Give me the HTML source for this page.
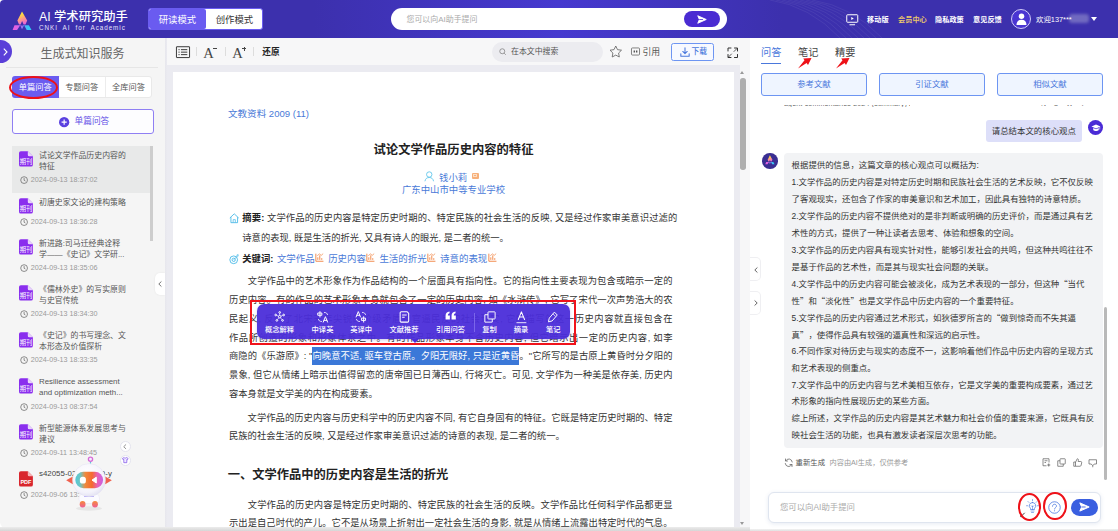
<!DOCTYPE html>
<html lang="zh-CN">
<head>
<meta charset="utf-8">
<title>AI 学术研究助手</title>
<style>
*{box-sizing:border-box;margin:0;padding:0}
html,body{width:1118px;height:531px;overflow:hidden;background:#fff}
body{font-family:"Liberation Sans","Noto Sans CJK SC",sans-serif;position:relative;color:#333;-webkit-font-smoothing:antialiased;text-spacing-trim:space-all}
.a{position:absolute}
svg{display:block;overflow:visible}
/* ---------- header ---------- */
#hd{left:0;top:0;width:1118px;height:38.400px;background:linear-gradient(90deg,#3c30ad 0,#3c30ad 28%,#4639cf 50%,#3c30ad 70%,#3c30ad 100%);border-top-left-radius:4px}
#hd .t1{left:39px;top:9.500px;font-size:12.3px;line-height:15px;color:#fff;white-space:nowrap;font-weight:500}
#hd .t2{left:39px;top:23.5px;font-size:6.3px;line-height:8px;color:#e4e1fa;white-space:nowrap;letter-spacing:.95px;word-spacing:2.4px}
#mode{left:148px;top:8px;width:115px;height:22px;background:#fff;border-radius:3px;border:1px solid #6a5cf0;overflow:hidden}
#mode .on{left:0;top:0;width:57px;height:20px;background:#6a5bf0;border-radius:2px;color:#fff;font-size:9.4px;line-height:21.400px;text-align:center}
#mode .off{left:57px;top:0;width:57px;height:20px;color:#333;font-size:9.4px;line-height:21.400px;text-align:center}
#hs{left:391px;top:8px;width:336px;height:22px;border-radius:11px;background:#fff}
#hs .ph{left:15.500px;top:1.200px;font-size:7.950px;line-height:22px;color:#aaa;white-space:nowrap}
#hs .go{left:293px;top:3px;width:36px;height:16px;border-radius:8px;background:#4a2bd2}
.nav{top:1px;height:38px;line-height:38px;font-size:7.2px;color:#fff;font-weight:700;white-space:nowrap}
/* ---------- sidebar ---------- */
#sb{left:0;top:38px;width:165px;height:489.500px;background:#f5f5f5;border-bottom-left-radius:6px}
#gap1{left:165px;top:38px;width:7.500px;height:490px;background:linear-gradient(90deg,#e6e6ec 0,#ebebf1 2px,#ebebf1 100%)}
.it{left:12px;width:138px}
.it .ttl{left:27px;font-size:7.9px;line-height:10.800px;color:#555;white-space:nowrap}
.it .dt{left:18.800px;font-size:7.200px;line-height:9px;color:#999;white-space:nowrap}
.tab{top:38px;height:22px;line-height:23.400px;font-size:8.2px;text-align:center;color:#555;white-space:nowrap}
/* ---------- doc ---------- */
#tb{left:166.500px;top:38px;width:583.500px;height:27px;background:#f7f7f8}
#doc{left:172.500px;top:72px;width:561.700px;height:456px;background:#fff;overflow:hidden}
.ln{position:absolute;left:56.500px;width:443.500px;font-size:9.3px;line-height:18.7px;height:18.7px;color:#333;white-space:nowrap}
.j{text-align:justify;text-align-last:justify}
.blue{color:#4a7ad8}
.kw{font-size:9.450px}
.q{font-family:"Noto Sans CJK SC",sans-serif}
/* ---------- right ---------- */
#rp{left:750px;top:38px;width:368px;height:490px;background:#fff}
.rb{top:35px;width:106px;height:22.500px;border:1px solid #6d95f2;border-radius:3px;background:#eff5ff;color:#4a78dc;font-size:8.4px;line-height:20px;text-align:center}
.al{position:absolute;left:42px;width:301.5px;font-size:8.420px;line-height:16.85px;height:16.85px;color:#333;white-space:nowrap}
</style>
</head>
<body>
<!-- HEADER -->
<div id="hd" class="a">
  <div class="a t1">AI 学术研究助手</div>
  <div class="a t2">CNKI AI for Academic</div>
  <div id="mode" class="a"><div class="a on">研读模式</div><div class="a off">创作模式</div></div>
  <div id="hs" class="a"><div class="a ph">您可以向AI助手提问</div><div class="a go"><svg class="a" style="left:12.500px;top:3.500px" width="10" height="9" viewBox="0 0 20 18"><path d="M1.500 1.500l17 7.500-17 7.500 3.300-7.500z" fill="#fff" stroke="#fff" stroke-width="1.800" stroke-linejoin="round"/><path d="M4.500 9H12" stroke="#4a2bd2" stroke-width="1.600"/></svg></div></div>

  <!-- decorative lines -->
  <svg class="a" style="left:770px;top:0" width="120" height="38" viewBox="0 0 120 38" fill="none" stroke="#fff" stroke-width=".5" opacity=".13"><path d="M0 0Q40 6 70 38M6 0Q46 6 76 38M12 0Q52 6 82 38M18 0Q58 6 88 38M24 0Q64 6 94 38M30 0Q70 6 100 38M36 0Q76 6 106 38M42 0Q82 6 112 38"/></svg>
  <!-- logo -->
  <svg class="a" style="left:11.500px;top:10.500px" width="20" height="20" viewBox="0 0 200 200">
    <defs>
      <linearGradient id="lg1" x1=".35" y1="0" x2=".65" y2="1"><stop offset="0" stop-color="#f4f236"/><stop offset=".3" stop-color="#fbd04a"/><stop offset=".55" stop-color="#ff9c86"/><stop offset="1" stop-color="#e462dc"/></linearGradient>
      <linearGradient id="lg2" x1="0" y1="0" x2="1" y2="0"><stop offset="0" stop-color="#ee5edc"/><stop offset=".35" stop-color="#d466ea"/><stop offset=".5" stop-color="#9a7af8"/><stop offset=".68" stop-color="#4cb6f4"/><stop offset="1" stop-color="#22d4f6"/></linearGradient>
    </defs>
    <path d="M100 4L152 95 135 134H116L101 100 86 134H70L54 95z" fill="url(#lg1)"/>
    <path d="M25 143H82L51 191H6zM121 143H169L195 191H147zM82 143H95L100 158 106 143H121L100 182z" fill="url(#lg2)"/>
  </svg>
  <!-- monitor icon -->
  <svg class="a" style="left:846px;top:13.500px" width="12.500" height="11.500" viewBox="0 0 25 23" fill="none" stroke="#fff" stroke-width="2"><rect x="1.500" y="1.500" width="22" height="15" rx="1.500"/><path d="M7 21.500h11" /><path d="M10.500 6v6l5-3z" fill="#fff" stroke="none"/></svg>
  <!-- avatar -->
  <div class="a" style="left:1011px;top:9px;width:20px;height:20px;border-radius:50%;background:#4a35d2;border:1.200px solid #cfc9f7"></div>
  <svg class="a" style="left:1015.500px;top:12.500px" width="11" height="12.500" viewBox="0 0 22 25" fill="#fff"><circle cx="11" cy="6.500" r="5.500"/><path d="M1 24c0-7 4-10.500 10-10.500S21 17 21 24z"/></svg>
  <div class="a" style="left:1069px;top:14px;width:20px;height:9px;background:#7a74c4;border-radius:3px;filter:blur(1.600px);opacity:.85"></div>
  <div class="a" style="left:1091px;top:17px;width:0;height:0;border-left:3.200px solid transparent;border-right:3.200px solid transparent;border-top:4px solid #fff"></div>
  <div class="a nav" style="left:867px">移动版</div>
  <div class="a nav" style="left:898px;color:#e9c56c">会员中心</div>
  <div class="a nav" style="left:935px">隐私政策</div>
  <div class="a nav" style="left:973px">意见反馈</div>
  <div class="a nav" style="left:1036px;font-weight:400;font-size:7.4px">欢迎137***</div>
</div>
<!-- SIDEBAR -->
<div id="sb" class="a">
  <div class="a" style="left:0;top:2px;width:12px;height:23px;background:#5a3fd8;border-radius:0 12px 12px 0"></div>
  <svg class="a" style="left:3px;top:9.5px" width="5" height="8" viewBox="0 0 5 8" fill="none" stroke="#fff" stroke-width="1.1"><path d="M.8.7L4 4 .8 7.3"/></svg>
  <div class="a" style="left:0;top:8.900px;width:165px;text-align:center;font-size:12px;line-height:14px;color:#666">生成式知识服务</div>
  <div class="a" style="left:6px;top:29px;width:152px;height:1px;background:#e6e6e6"></div>
  <div class="a" style="left:12px;top:38px;width:140px;height:21.800px;background:#fff;border:1px solid #e9e9e9;border-radius:3px"></div>
  <div class="a" style="left:12px;top:38px;width:46.5px;height:21.800px;background:#6b5cf0;border-radius:3px 0 0 3px"></div>
  <div class="a" style="left:105px;top:39px;width:1px;height:20px;background:#ececec"></div>
  <div class="a tab" style="left:12px;width:46.5px;color:#fff">单篇问答</div>
  <div class="a tab" style="left:58.5px;width:46.5px">专题问答</div>
  <div class="a tab" style="left:105px;width:47px">全库问答</div>
  <div class="a" style="left:9.300px;top:38.400px;width:49.200px;height:23px;border:2.400px solid #ee1118;border-radius:50%"></div>
  <div class="a" style="left:12px;top:71px;width:142px;height:25px;border:1px solid #8f7ff3;border-radius:3px;background:#fdfdff"></div>
  <svg class="a" style="left:59px;top:79px" width="10.300" height="10.300" viewBox="0 0 18 18"><circle cx="9" cy="9" r="9" fill="#5a41e0"/><path d="M9 4.5v9M4.5 9h9" stroke="#fff" stroke-width="2" fill="none"/></svg>
  <div class="a" style="left:74.5px;top:76px;font-size:8.7px;line-height:15px;color:#6450e6;white-space:nowrap">单篇问答</div>
<div class="a it" style="top:108px;height:46.600px;background:#e8e9e9;"><svg class="a" style="left:6.800px;top:5.300px" width="13.900" height="15.800" viewBox="0 0 30 33"><path d="M4 0h15l11 11v18a4 4 0 0 1-4 4H4a4 4 0 0 1-4-4V4a4 4 0 0 1 4-4z" fill="#8a2eee"/><path d="M19 0l11 11h-8a3 3 0 0 1-3-3z" fill="#e9d6fb"/><text x="15" y="27.5" text-anchor="middle" font-size="13.600" fill="#fff" font-family="Liberation Sans,Noto Sans CJK SC,sans-serif">期刊</text></svg><div class="a ttl" style="top:4.900px">试论文学作品历史内容的<br>特征</div><svg class="a" style="left:7.600px;top:29.9px" width="8.200" height="8.200" viewBox="0 0 16 16" fill="none" stroke="#6a6a6a" stroke-width="1.500"><circle cx="8" cy="8" r="6.6"/><path d="M8 4v4.3l2.6 1.5"/></svg><div class="a dt" style="top:28.9px">2024-09-13 18:37:02</div></div>
<div class="a it" style="top:155px;height:42px;"><svg class="a" style="left:6.800px;top:5.300px" width="13.900" height="15.800" viewBox="0 0 30 33"><path d="M4 0h15l11 11v18a4 4 0 0 1-4 4H4a4 4 0 0 1-4-4V4a4 4 0 0 1 4-4z" fill="#8a2eee"/><path d="M19 0l11 11h-8a3 3 0 0 1-3-3z" fill="#e9d6fb"/><text x="15" y="27.5" text-anchor="middle" font-size="13.600" fill="#fff" font-family="Liberation Sans,Noto Sans CJK SC,sans-serif">期刊</text></svg><div class="a ttl" style="top:4.900px">初唐史家文论的建构策略</div><svg class="a" style="left:7.600px;top:25.4px" width="8.200" height="8.200" viewBox="0 0 16 16" fill="none" stroke="#6a6a6a" stroke-width="1.500"><circle cx="8" cy="8" r="6.6"/><path d="M8 4v4.3l2.6 1.5"/></svg><div class="a dt" style="top:24.4px">2024-09-13 18:36:28</div></div>
<div class="a it" style="top:196px;height:46px;"><svg class="a" style="left:6.800px;top:5.300px" width="13.900" height="15.800" viewBox="0 0 30 33"><path d="M4 0h15l11 11v18a4 4 0 0 1-4 4H4a4 4 0 0 1-4-4V4a4 4 0 0 1 4-4z" fill="#8a2eee"/><path d="M19 0l11 11h-8a3 3 0 0 1-3-3z" fill="#e9d6fb"/><text x="15" y="27.5" text-anchor="middle" font-size="13.600" fill="#fff" font-family="Liberation Sans,Noto Sans CJK SC,sans-serif">期刊</text></svg><div class="a ttl" style="top:4.900px">新进路:司马迁经典诠释<br>学——《史记》文学研...</div><svg class="a" style="left:7.600px;top:29.9px" width="8.200" height="8.200" viewBox="0 0 16 16" fill="none" stroke="#6a6a6a" stroke-width="1.500"><circle cx="8" cy="8" r="6.6"/><path d="M8 4v4.3l2.6 1.5"/></svg><div class="a dt" style="top:28.9px">2024-09-13 18:35:06</div></div>
<div class="a it" style="top:242px;height:46px;"><svg class="a" style="left:6.800px;top:5.300px" width="13.900" height="15.800" viewBox="0 0 30 33"><path d="M4 0h15l11 11v18a4 4 0 0 1-4 4H4a4 4 0 0 1-4-4V4a4 4 0 0 1 4-4z" fill="#8a2eee"/><path d="M19 0l11 11h-8a3 3 0 0 1-3-3z" fill="#e9d6fb"/><text x="15" y="27.5" text-anchor="middle" font-size="13.600" fill="#fff" font-family="Liberation Sans,Noto Sans CJK SC,sans-serif">期刊</text></svg><div class="a ttl" style="top:4.900px">《儒林外史》的写实原则<br>与史官传统</div><svg class="a" style="left:7.600px;top:29.9px" width="8.200" height="8.200" viewBox="0 0 16 16" fill="none" stroke="#6a6a6a" stroke-width="1.500"><circle cx="8" cy="8" r="6.6"/><path d="M8 4v4.3l2.6 1.5"/></svg><div class="a dt" style="top:28.9px">2024-09-13 18:34:30</div></div>
<div class="a it" style="top:288.500px;height:47px;"><svg class="a" style="left:6.800px;top:5.300px" width="13.900" height="15.800" viewBox="0 0 30 33"><path d="M4 0h15l11 11v18a4 4 0 0 1-4 4H4a4 4 0 0 1-4-4V4a4 4 0 0 1 4-4z" fill="#8a2eee"/><path d="M19 0l11 11h-8a3 3 0 0 1-3-3z" fill="#e9d6fb"/><text x="15" y="27.5" text-anchor="middle" font-size="13.600" fill="#fff" font-family="Liberation Sans,Noto Sans CJK SC,sans-serif">期刊</text></svg><div class="a ttl" style="top:4.900px">《史记》的书写理念、文<br>本形态及价值探析</div><svg class="a" style="left:7.600px;top:29.9px" width="8.200" height="8.200" viewBox="0 0 16 16" fill="none" stroke="#6a6a6a" stroke-width="1.500"><circle cx="8" cy="8" r="6.6"/><path d="M8 4v4.3l2.6 1.5"/></svg><div class="a dt" style="top:28.9px">2024-09-13 18:33:35</div></div>
<div class="a it" style="top:335px;height:46px;"><svg class="a" style="left:6.800px;top:5.300px" width="13.900" height="15.800" viewBox="0 0 30 33"><path d="M4 0h15l11 11v18a4 4 0 0 1-4 4H4a4 4 0 0 1-4-4V4a4 4 0 0 1 4-4z" fill="#8a2eee"/><path d="M19 0l11 11h-8a3 3 0 0 1-3-3z" fill="#e9d6fb"/><text x="15" y="27.5" text-anchor="middle" font-size="13.600" fill="#fff" font-family="Liberation Sans,Noto Sans CJK SC,sans-serif">期刊</text></svg><div class="a ttl" style="top:4.300px">Resilience assessment<br>and optimization meth...</div><svg class="a" style="left:7.600px;top:29.9px" width="8.200" height="8.200" viewBox="0 0 16 16" fill="none" stroke="#6a6a6a" stroke-width="1.500"><circle cx="8" cy="8" r="6.6"/><path d="M8 4v4.3l2.6 1.5"/></svg><div class="a dt" style="top:28.9px">2024-09-13 08:37:54</div></div>
<div class="a it" style="top:381px;height:47px;"><svg class="a" style="left:6.800px;top:5.300px" width="13.900" height="15.800" viewBox="0 0 30 33"><path d="M4 0h15l11 11v18a4 4 0 0 1-4 4H4a4 4 0 0 1-4-4V4a4 4 0 0 1 4-4z" fill="#8a2eee"/><path d="M19 0l11 11h-8a3 3 0 0 1-3-3z" fill="#e9d6fb"/><text x="15" y="27.5" text-anchor="middle" font-size="13.600" fill="#fff" font-family="Liberation Sans,Noto Sans CJK SC,sans-serif">期刊</text></svg><div class="a ttl" style="top:4.900px">新型能源体系发展思考与<br>建议</div><svg class="a" style="left:7.600px;top:29.9px" width="8.200" height="8.200" viewBox="0 0 16 16" fill="none" stroke="#6a6a6a" stroke-width="1.500"><circle cx="8" cy="8" r="6.6"/><path d="M8 4v4.3l2.6 1.5"/></svg><div class="a dt" style="top:28.9px">2024-09-11 13:48:45</div></div>
<div class="a it" style="top:428px;height:46px;"><svg class="a" style="left:6.800px;top:5.300px" width="13.900" height="15.800" viewBox="0 0 30 33"><path d="M4 0h15l11 11v18a4 4 0 0 1-4 4H4a4 4 0 0 1-4-4V4a4 4 0 0 1 4-4z" fill="#d9262d"/><path d="M19 0l11 11h-8a3 3 0 0 1-3-3z" fill="#f6b5b8"/><text x="15" y="27" text-anchor="middle" font-size="12" font-weight="700" fill="#fff" font-family="Liberation Sans,sans-serif">PDF</text></svg><div class="a ttl" style="top:3.300px;color:#444">s42055-023-00199-y</div><svg class="a" style="left:7.600px;top:25.4px" width="8.200" height="8.200" viewBox="0 0 16 16" fill="none" stroke="#6a6a6a" stroke-width="1.500"><circle cx="8" cy="8" r="6.6"/><path d="M8 4v4.3l2.6 1.5"/></svg><div class="a dt" style="top:24.4px">2024-09-06 13:26:41</div></div>
  <div class="a" style="left:150px;top:108px;width:3px;height:95px;background:#cdcdcd"></div>
  <!-- collapse tab -->
  <div class="a" style="left:154.5px;top:235px;width:10.5px;height:21.5px;background:#fff;border-radius:5px 0 0 5px;box-shadow:0 0 2px rgba(0,0,0,.08)"></div>
  <svg class="a" style="left:158px;top:243px" width="4" height="6" viewBox="0 0 4 6" fill="none" stroke="#777" stroke-width="1"><path d="M3.4.5L.8 3l2.6 2.5"/></svg>
  <!-- small round buttons -->
  <div class="a" style="left:119.5px;top:402.5px;width:11.5px;height:11.5px;border-radius:50%;background:#fff;border:.6px solid #e4e4ee"></div>
  <svg class="a" style="left:123.3px;top:405.6px" width="3.6" height="5.4" viewBox="0 0 4 6" fill="none" stroke="#888" stroke-width="1"><path d="M3.4.5L.8 3l2.6 2.5"/></svg>
  <div class="a" style="left:119.5px;top:416.5px;width:11.5px;height:11.5px;border-radius:50%;background:#fff;border:.6px solid #e4e4ee"></div>
  <svg class="a" style="left:122px;top:419.2px" width="6.6" height="6.2" viewBox="0 0 14 13" fill="#efeaff" stroke="#7a4ee8" stroke-width="1.5" stroke-linejoin="round"><path d="M4.4 1L1 3l1.4 2.8 1.4-.6V12h6.4V5.2l1.4.6L13 3 9.600 1C9.200 2.600 4.800 2.600 4.400 1z"/></svg>
  <!-- robot -->
  <svg class="a" style="left:60px;top:414px" width="60" height="62" viewBox="0 0 60 62">
    <defs>
      <linearGradient id="vz" x1="0" y1="0" x2="1" y2="0"><stop offset="0" stop-color="#52c9d6"/><stop offset=".18" stop-color="#6fc4c4"/><stop offset=".36" stop-color="#f08a3c"/><stop offset=".6" stop-color="#f5692f"/><stop offset=".8" stop-color="#e860b8"/><stop offset="1" stop-color="#c861e2"/></linearGradient>
      <radialGradient id="hdg" cx=".42" cy=".35" r=".75"><stop offset="0" stop-color="#ffffff"/><stop offset=".7" stop-color="#f4f3fb"/><stop offset="1" stop-color="#d9d8ee"/></radialGradient>
      <linearGradient id="ft" x1="0" y1="0" x2="0" y2="1"><stop offset="0" stop-color="#f58a3a"/><stop offset="1" stop-color="#ee5c98"/></linearGradient>
    </defs>
    <ellipse cx="29" cy="56.500" rx="13" ry="2.200" fill="#000" opacity=".06"/>
    <path d="M30.500 12.500v-3" stroke="#5fc6dc" stroke-width="1.200"/>
    <circle cx="30.500" cy="7.300" r="2.100" fill="#f4ecff" stroke="#d66ad6" stroke-width="1.300"/>
    <path d="M12.800 24.500L6.200 28.300l6.600 4z" fill="#f0604e"/>
    <path d="M45.200 24.500l6.600 3.800-6.600 4z" fill="#f0604e"/>
    <rect x="19" y="42" width="20.500" height="9.500" rx="4" fill="#fbfbff" stroke="#e4e3f2" stroke-width=".5"/>
    <path d="M24 44.500h10" stroke="#9a8cf0" stroke-width=".9" opacity=".7"/>
    <ellipse cx="22.600" cy="52.300" rx="2.900" ry="3.300" fill="url(#ft)"/>
    <ellipse cx="35" cy="52.300" rx="2.900" ry="3.300" fill="url(#ft)"/>
    <circle cx="29" cy="28" r="16.400" fill="url(#hdg)" stroke="#e2e1f1" stroke-width=".5"/>
    <rect x="15.300" y="19.800" width="27.800" height="16.400" rx="8.200" fill="url(#vz)"/>
    <rect x="19.900" y="24.800" width="6" height="6.800" rx="2.600" fill="#fff"/>
    <path d="M36.300 25.200l-4.300 2.900 4.300 2.900z" fill="#fff" stroke="#fff" stroke-width="1" stroke-linejoin="round"/>
  </svg>

</div>
<div id="gap1" class="a"></div>
<!-- DOC -->
<div id="tb" class="a"><div class="a" style="left:5.500px;top:0;width:578px;height:27px">
  <svg class="a" style="left:3.600px;top:8.400px" width="14" height="12.300" viewBox="0 0 31 26" fill="none" stroke="#3a3a3a" stroke-width="2.200"><rect x="1" y="1" width="29" height="24" rx=".5"/><path d="M11 7.500h14M11 13h14M11 18.500h14M5.500 7.500h2.500M5.500 13h2.500M5.500 18.500h2.500"/></svg>
  <div class="a" style="left:24px;top:9px;width:1px;height:9px;background:#ddd"></div>
  <div class="a" style="left:31.300px;top:7px;font-family:'Liberation Serif',serif;font-size:14.600px;line-height:16px;color:#444">A</div>
  <div class="a" style="left:41px;top:10.300px;width:3.800px;height:1px;background:#444"></div>
  <div class="a" style="left:52.500px;top:9px;width:1px;height:9px;background:#ddd"></div>
  <div class="a" style="left:60.300px;top:7px;font-family:'Liberation Serif',serif;font-size:14.600px;line-height:16px;color:#444">A</div>
  <div class="a" style="left:70px;top:10.300px;width:4.200px;height:1px;background:#444"></div>
  <div class="a" style="left:71.600px;top:8.700px;width:1px;height:4.200px;background:#444"></div>
  <div class="a" style="left:81px;top:9px;width:1px;height:9px;background:#ddd"></div>
  <div class="a" style="left:90.300px;top:7.400px;font-size:8.600px;line-height:14px;color:#222;font-weight:700;white-space:nowrap">还原</div>
  <!-- search in doc -->
  <div class="a" style="left:320px;top:4px;width:111px;height:19.500px;border-radius:10px;background:#ececf0"></div>
  <svg class="a" style="left:327px;top:10px" width="7.500" height="7.500" viewBox="0 0 15 15" fill="none" stroke="#777" stroke-width="1.400"><circle cx="6.500" cy="6.500" r="5"/><path d="M10.300 10.300L13.500 13.500"/></svg>
  <div class="a" style="left:339px;top:4px;font-size:7.900px;line-height:19.500px;color:#555;white-space:nowrap">在本文中搜索</div>
  <svg class="a" style="left:436.500px;top:7px" width="13.500" height="13" viewBox="0 0 27 26" fill="none" stroke="#666" stroke-width="1.700" stroke-linejoin="round"><path d="M13.500 2l3.500 7.300 8 1.100-5.800 5.600 1.400 8L13.500 20.200 6.400 24l1.400-8L2 10.400l8-1.100z"/></svg>
  <svg class="a" style="left:458.800px;top:9.200px" width="9" height="9" viewBox="0 0 19 17" fill="none" stroke="#666" stroke-width="1.700"><rect x="1" y="1" width="17" height="15" rx="2"/><path d="M5.500 6.500h3v4h-3zM10.500 6.500h3v4h-3z" fill="#555" stroke="none"/></svg>
  <div class="a" style="left:470.500px;top:7px;font-size:8.800px;line-height:15px;color:#555;white-space:nowrap">引用</div>
  <div class="a" style="left:499.300px;top:4.600px;width:42.600px;height:18px;border:1px solid #6d95f2;border-radius:2.500px;background:#f7f9ff"></div>
  <svg class="a" style="left:507.800px;top:8.500px" width="10" height="10" viewBox="0 0 18 18" fill="none" stroke="#4a78dc" stroke-width="1.900" stroke-linecap="round" stroke-linejoin="round"><path d="M9 1.500v10M5 8l4 4 4-4M1.500 12v4.500h15V12"/></svg>
  <div class="a" style="left:519.500px;top:7px;font-size:7.800px;line-height:14px;color:#4a78dc;font-weight:500;white-space:nowrap">下载</div>
  <svg class="a" style="left:554.500px;top:8.500px" width="11.500" height="11.500" viewBox="0 0 23 23" fill="none" stroke="#333" stroke-width="2" stroke-linecap="round" stroke-linejoin="round"><path d="M2 8V2h6M15 2h6v6M21 15v6h-6M8 21H2v-6"/><path d="M14 9l6-6M9 14l-6 6" stroke-width="1.600"/></svg>
</div></div>
<div class="a" style="left:172px;top:65px;width:578px;height:7px;background:#ebebf1"></div>
<div id="doc" class="a">
<div class="a blue" style="left:55.500px;top:35.400px;font-size:9.550px;line-height:14px;white-space:nowrap">文教资料 2009 (11)</div>
<div class="a" style="left:0;top:68.5px;width:562px;text-align:center;font-size:12.300px;line-height:18px;font-weight:700;color:#222;white-space:nowrap">试论文学作品历史内容的特征</div>
<svg class="a" style="left:251px;top:98.800px" width="10.500" height="10.800" viewBox="0 0 19 20" fill="none" stroke="#5cc4ea" stroke-width="1.600"><circle cx="9.500" cy="6.500" r="5"/><path d="M1.500 19c.8-4.500 3.500-7 8-7s7.200 2.500 8 7"/></svg>
<div class="a blue" style="left:266.600px;top:99px;font-size:9.400px;line-height:13px;white-space:nowrap">钱小莉</div>
<div class="a" style="left:299.200px;top:100.700px;width:7px;height:6.800px;background:#f7b07a;border-radius:1px"></div>
<div class="a" style="left:300.500px;top:102.300px;width:4.400px;height:3.200px;border:.8px solid #fde3cc;opacity:.9"></div>
<div class="a blue" style="left:0;top:111px;width:562px;text-align:center;font-size:9.400px;line-height:13px;white-space:nowrap">广东中山市中等专业学校</div>
<svg class="a" style="left:56.300px;top:140.500px" width="10.500" height="10.500" viewBox="0 0 19 19" fill="none" stroke="#3db4e6" stroke-width="1.500" stroke-linejoin="round"><path d="M1.500 9L9.500 1.500l8 7.500M3.500 7.500V17.500h12V7.500"/><path d="M7.500 17v-5h4v5" stroke-width="1.200"/></svg>
<div class="ln j" style="top:136.65px;left:69.800px;width:435px;"><b style="color:#222">摘要:</b> 文学作品的历史内容是特定历史时期的、特定民族的社会生活的反映, 又是经过作家审美意识过滤的</div>
<div class="ln" style="top:156.65px;left:69.800px;">诗意的表现, 既是生活的折光, 又具有诗人的眼光, 是二者的统一。</div>
<svg class="a" style="left:56.300px;top:181.500px" width="10.500" height="10.500" viewBox="0 0 19 19" fill="none" stroke="#3db4e6" stroke-width="1.500"><circle cx="8.500" cy="10.500" r="7"/><circle cx="8.500" cy="10.500" r="3"/><path d="M8.500 10.500L16 3M13.500 2.500l3-1.500-.500 3.500" stroke-width="1.300"/></svg>
<div class="ln" style="top:177.65px;left:69.800px;"><b style="color:#222">关键词:</b> <span class="blue kw" style="margin-left:1px">文学作品</span><svg style="display:inline-block;vertical-align:-0.8px;margin:0 1.600px 0 .3px" width="9" height="9.200" viewBox="0 0 16 16" fill="none" stroke="#f0803c" stroke-width="1.600"><path d="M1.500 1v13.500H15"/><path d="M5 12V7.500M8.500 12V4M12 12V9" /><path d="M4 4.500L8 1.500l3 2.500 3.500-3" stroke-width="1.200"/></svg> <span class="blue kw">历史内容</span><svg style="display:inline-block;vertical-align:-0.8px;margin:0 1.600px 0 .3px" width="9" height="9.200" viewBox="0 0 16 16" fill="none" stroke="#f0803c" stroke-width="1.600"><path d="M1.500 1v13.500H15"/><path d="M5 12V7.500M8.500 12V4M12 12V9" /><path d="M4 4.500L8 1.500l3 2.500 3.500-3" stroke-width="1.200"/></svg> <span class="blue kw">生活的折光</span><svg style="display:inline-block;vertical-align:-0.8px;margin:0 1.600px 0 .3px" width="9" height="9.200" viewBox="0 0 16 16" fill="none" stroke="#f0803c" stroke-width="1.600"><path d="M1.500 1v13.500H15"/><path d="M5 12V7.500M8.500 12V4M12 12V9" /><path d="M4 4.500L8 1.500l3 2.500 3.500-3" stroke-width="1.200"/></svg> <span class="blue kw">诗意的表现</span><svg style="display:inline-block;vertical-align:-0.8px;margin:0 1.600px 0 .3px" width="9" height="9.200" viewBox="0 0 16 16" fill="none" stroke="#f0803c" stroke-width="1.600"><path d="M1.500 1v13.500H15"/><path d="M5 12V7.500M8.500 12V4M12 12V9" /><path d="M4 4.500L8 1.500l3 2.500 3.500-3" stroke-width="1.200"/></svg></div>
<div class="ln j" style="top:200.20px;"><span style="display:inline-block;width:18.600px"></span>文学作品中的艺术形象作为作品结构的一个层面具有指向性。它的指向性主要表现为包含或暗示一定的</div>
<div class="ln j" style="top:219.20px;">历史内容。有的作品的艺术形象本身就包含了一定的历史内容, 如《水浒传》, 它写了宋代一次声势浩大的农</div>
<div class="ln j" style="top:237.90px;">民起义, 反映了北宋末年尖锐的阶级矛盾和官逼民反的社会现实, 它所描写的这一历史内容就直接包含在</div>
<div class="ln j" style="top:256.60px;">作品所创造的形象和形象体系之中。有的作品形象本身不含历史内容, 但它暗示出一定的历史内容, 如李</div>
<div class="ln j" style="top:275.30px;">商隐的《乐游原》: "<span style="background:#3b78d8;color:#fff;padding:4.200px 0 4.200px 0">向晚意不适, 驱车登古原。夕阳无限好, 只是近黄昏</span>。"它所写的是古原上黄昏时分夕阳的</div>
<div class="ln j" style="top:294.00px;">景象, 但它从情绪上暗示出值得留恋的唐帝国已日薄西山, 行将灭亡。可见, 文学作为一种美是依存美, 历史内</div>
<div class="ln" style="top:312.70px;">容本身就是文学美的内在构成要素。</div>
<div class="ln j" style="top:336.70px;"><span style="display:inline-block;width:18.600px"></span>文学作品的历史内容与历史科学中的历史内容不同, 有它自身固有的特征。它既是特定历史时期的、特定</div>
<div class="ln" style="top:355.40px;">民族的社会生活的反映, 又是经过作家审美意识过滤的诗意的表现, 是二者的统一。</div>
<div class="a" style="left:55.300px;top:393.700px;font-size:12.250px;line-height:18px;font-weight:700;color:#222;white-space:nowrap">一、文学作品中的历史内容是生活的折光</div>
<div class="ln j" style="top:423.70px;"><span style="display:inline-block;width:18.600px"></span>文学作品的历史内容是特定历史时期的、特定民族的社会生活的反映。文学作品比任何科学作品都更显</div>
<div class="ln j" style="top:442.40px;">示出是自己时代的产儿。它不是从场景上折射出一定社会生活的身影, 就是从情绪上流露出特定时代的气息。</div>
</div>
<!-- doc scrollbar -->
<div class="a" style="left:734px;top:72px;width:6px;height:456px;background:#ebebf1"></div>
<div class="a" style="left:740px;top:65px;width:10px;height:463px;background:#f7f7f8"></div>
<div class="a" style="left:740px;top:78px;width:5.500px;height:92px;background:#aeaeae;border-radius:2.700px"></div>
<div class="a" style="left:740.200px;top:70.500px;width:0;height:0;border-left:2.500px solid transparent;border-right:2.500px solid transparent;border-bottom:3.500px solid #999"></div>
<div class="a" style="left:740.200px;top:522px;width:0;height:0;border-left:2.500px solid transparent;border-right:2.500px solid transparent;border-top:3.500px solid #999"></div>
<!-- floating toolbar -->
<div class="a" style="left:250px;top:299.600px;width:326.300px;height:45px;border:2.200px solid #f0131b;z-index:6"></div>
<div class="a" style="left:257px;top:304.200px;width:312.500px;height:35px;background:rgba(75,45,217,.95);border-radius:7px;z-index:5;box-shadow:0 1px 3px rgba(60,40,180,.25)">
<div class="a" style="left:22.5px;top:6.500px;width:40px;margin-left:-20px;display:flex;justify-content:center"><svg width="11.40" height="11.40" viewBox="0 0 20 20" fill="none" stroke="#fff" stroke-width="1.700"><circle cx="10" cy="10" r="2.200"/><circle cx="10" cy="2.500" r="1.500"/><circle cx="3" cy="7" r="1.500"/><circle cx="17" cy="7" r="1.500"/><circle cx="5" cy="16.500" r="1.500"/><circle cx="15" cy="16.500" r="1.500"/><path d="M10 4v3.800M4.400 7.600l3.500 1.500M15.600 7.600l-3.500 1.500M6 15.300l2.600-3.500M14 15.300l-2.600-3.500" stroke-width="1.200"/></svg></div>
<div class="a" style="left:22.5px;top:19.600px;width:40px;margin-left:-20px;text-align:center;font-size:7.300px;line-height:11px;color:#fff;font-weight:500;white-space:nowrap">概念解释</div>
<div class="a" style="left:65.5px;top:6.500px;width:40px;margin-left:-20px;display:flex;justify-content:center"><svg width="11.97" height="11.97" viewBox="0 0 21 21" fill="none" stroke="#fff" stroke-width="1.700" stroke-linecap="round" stroke-linejoin="round"><rect x="2" y="3.500" width="6.500" height="4"/><path d="M5.200 1v9.500"/><path d="M11 19.500l3.800-9.500 3.800 9.500M12.300 16.500h5"/><path d="M13 2.500c3 0 5 1.500 5.500 4M8 18.500c-3 0-5-1.500-5.500-4" stroke-width="1.400"/></svg></div>
<div class="a" style="left:65.5px;top:19.600px;width:40px;margin-left:-20px;text-align:center;font-size:7.300px;line-height:11px;color:#fff;font-weight:500;white-space:nowrap">中译英</div>
<div class="a" style="left:104.2px;top:6.500px;width:40px;margin-left:-20px;display:flex;justify-content:center"><svg width="11.97" height="11.97" viewBox="0 0 21 21" fill="none" stroke="#fff" stroke-width="1.700" stroke-linecap="round" stroke-linejoin="round"><path d="M2 10.500L5.800 1l3.800 9.500M3.300 7.500h5"/><rect x="12" y="12.500" width="6.500" height="4"/><path d="M15.200 10v9.500"/><path d="M13 2.500c3 0 5 1.500 5.500 4M8 18.500c-3 0-5-1.500-5.500-4" stroke-width="1.400"/></svg></div>
<div class="a" style="left:104.2px;top:19.600px;width:40px;margin-left:-20px;text-align:center;font-size:7.300px;line-height:11px;color:#fff;font-weight:500;white-space:nowrap">英译中</div>
<div class="a" style="left:147.0px;top:6.500px;width:40px;margin-left:-20px;display:flex;justify-content:center"><svg width="10.83" height="11.97" viewBox="0 0 19 21" fill="none" stroke="#fff" stroke-width="1.800" stroke-linejoin="round"><path d="M2 3.500a2 2 0 0 1 2-2h10.500l2.500 2.500V17.500a2 2 0 0 1-2 2H4a2 2 0 0 1-2-2z"/><path d="M5.500 7h8M5.500 11h4.500"/></svg></div>
<div class="a" style="left:147.0px;top:19.600px;width:40px;margin-left:-20px;text-align:center;font-size:7.300px;line-height:11px;color:#fff;font-weight:500;white-space:nowrap">文献推荐</div>
<div class="a" style="left:193.5px;top:6.500px;width:40px;margin-left:-20px;display:flex;justify-content:center"><svg width="11.40" height="9.12" viewBox="0 0 20 16" fill="#fff"><path d="M1 15V8.500C1 4 3.500 1.500 8 1v3C6 4.500 5.200 5.800 5 8h3.500v7zM11.500 15V8.500c0-4.500 2.500-7 7-7.500v3c-2 .5-2.800 1.800-3 4H19v7z"/></svg></div>
<div class="a" style="left:193.5px;top:19.600px;width:40px;margin-left:-20px;text-align:center;font-size:7.300px;line-height:11px;color:#fff;font-weight:500;white-space:nowrap">引用问答</div>
<div class="a" style="left:232.5px;top:6.500px;width:40px;margin-left:-20px;display:flex;justify-content:center"><svg width="11.97" height="11.97" viewBox="0 0 21 21" fill="none" stroke="#fff" stroke-width="1.700" stroke-linejoin="round"><rect x="7" y="1.500" width="12.500" height="12.500" rx="1"/><path d="M7 6.500H1.500V19.500H14.500V14"/></svg></div>
<div class="a" style="left:232.5px;top:19.600px;width:40px;margin-left:-20px;text-align:center;font-size:7.300px;line-height:11px;color:#fff;font-weight:500;white-space:nowrap">复制</div>
<div class="a" style="left:264.0px;top:6.500px;width:40px;margin-left:-20px;display:flex;justify-content:center"><svg width="10.83" height="12.54" viewBox="0 0 19 22" fill="none" stroke="#fff" stroke-width="1.800" stroke-linecap="round" stroke-linejoin="round"><path d="M4 15L9.500 1.500 15 15M6 10.500h7"/><path d="M1.500 20.500h16" stroke-width="1.500"/></svg></div>
<div class="a" style="left:264.0px;top:19.600px;width:40px;margin-left:-20px;text-align:center;font-size:7.300px;line-height:11px;color:#fff;font-weight:500;white-space:nowrap">摘录</div>
<div class="a" style="left:296.2px;top:6.500px;width:40px;margin-left:-20px;display:flex;justify-content:center"><svg width="11.40" height="11.40" viewBox="0 0 20 20" fill="none" stroke="#fff" stroke-width="1.700" stroke-linejoin="round"><path d="M13 2l5 5-9 10.500-6.500 1.500 1.500-6.500z"/><path d="M10.500 5l4.500 4.500" stroke-width="1.300"/></svg></div>
<div class="a" style="left:296.2px;top:19.600px;width:40px;margin-left:-20px;text-align:center;font-size:7.300px;line-height:11px;color:#fff;font-weight:500;white-space:nowrap">笔记</div>
<div class="a" style="left:216.500px;top:9px;width:1px;height:19px;background:#7b66ea"></div>
</div>
<div class="a" style="left:411px;top:339px;width:0;height:0;border-left:4px solid transparent;border-right:4px solid transparent;border-top:4.500px solid #4b2dd9;z-index:5"></div>
<!-- RIGHT -->
<div id="rp" class="a">
<div class="a" style="left:11px;top:7px;font-size:10.200px;line-height:15px;color:#4a78dc;white-space:nowrap">问答</div>
<div class="a" style="left:11px;top:24.500px;width:19.500px;height:1.600px;background:#4a78dc"></div>
<div class="a" style="left:48px;top:7px;font-size:10.200px;line-height:15px;color:#444;white-space:nowrap">笔记</div>
<div class="a" style="left:85px;top:7px;font-size:10.200px;line-height:15px;color:#444;white-space:nowrap">精要</div>
<svg class="a" style="left:46.5px;top:20px" width="15" height="11" viewBox="0 0 15 11"><path d="M14.500 0L11 7 9.600 4.900 1 10.500 7.500 2.300 6.200.5z" fill="#ee1118"/></svg>
<svg class="a" style="left:84.5px;top:20px" width="15" height="11" viewBox="0 0 15 11"><path d="M14.500 0L11 7 9.600 4.900 1 10.500 7.500 2.300 6.200.5z" fill="#ee1118"/></svg>
<div class="a rb" style="left:11px">参考文献</div>
<div class="a rb" style="left:129px">引证文献</div>
<div class="a rb" style="left:247px">相似文献</div>
<div class="a" style="left:34px;top:66.600px;width:126px;height:2px;overflow:hidden"><div style="font-size:7px;line-height:8px;margin-top:-4.600px;color:#666;white-space:nowrap;letter-spacing:.2px">agent commentaries 2024 (summary) 2024-09-13</div></div>
<div class="a" style="left:291px;top:66.600px;width:56px;height:2px;overflow:hidden"><div style="font-size:7px;line-height:8px;margin-top:-4.600px;color:#777;white-space:nowrap;letter-spacing:2.800px">N U W Y</div></div>
<div class="a" style="left:236px;top:82px;width:95.700px;height:21.500px;border-radius:3px;background:#dddff9;font-size:8.420px;line-height:23.600px;text-align:center;color:#333;white-space:nowrap">请总结本文的核心观点</div>
<div class="a" style="left:338px;top:82.200px;width:15.300px;height:15.300px;border-radius:50%;background:#4a2bd6"></div>
<svg class="a" style="left:340.800px;top:86px" width="10" height="8" viewBox="0 0 20 16" fill="#fff"><path d="M10 1L1 5l9 4 9-4z"/><path d="M4.500 8v4c1.500 1.500 3.500 2 5.500 2s4-.5 5.500-2V8L10 10.500z"/><path d="M17.500 6v5" stroke="#fff" stroke-width="1.200"/></svg>
<div class="a" style="left:12px;top:115px;width:15.500px;height:15.500px;border-radius:50%;background:#3a2e92"></div>
<svg class="a" style="left:14.900px;top:117.300px" width="9.800" height="9.800" viewBox="0 0 200 200"><path d="M100 4L152 95 135 134H116L101 100 86 134H70L54 95z" fill="url(#lg1)"/><path d="M25 143H82L51 191H6zM121 143H169L195 191H147zM82 143H95L100 158 106 143H121L100 182z" fill="url(#lg2)"/></svg>
<div class="a" style="left:34px;top:115px;width:319px;height:295px;background:#f2f3f5;border-radius:4px">
<div class="al" style="left:7.600px;top:4.48px">根据提供的信息，这篇文章的核心观点可以概括为:</div>
<div class="al" style="left:7.600px;top:21.33px">1.文学作品的历史内容是对特定历史时期和民族社会生活的艺术反映，它不仅反映</div>
<div class="al" style="left:7.600px;top:38.18px">了客观现实，还包含了作家的审美意识和艺术加工，因此具有独特的诗意特质。</div>
<div class="al" style="left:7.600px;top:55.03px">2.文学作品的历史内容不提供绝对的是非判断或明确的历史评价，而是通过具有艺</div>
<div class="al" style="left:7.600px;top:71.88px">术性的方式，提供了一种让读者去思考、体验和想象的空间。</div>
<div class="al" style="left:7.600px;top:88.73px">3.文学作品的历史内容具有现实针对性，能够引发社会的共鸣，但这种共鸣往往不</div>
<div class="al" style="left:7.600px;top:105.58px">是基于作品的艺术性，而是其与现实社会问题的关联。</div>
<div class="al" style="left:7.600px;top:122.43px">4.文学作品中的历史内容可能会被淡化，成为艺术表现的一部分，但这种<span class="q">“</span>当代</div>
<div class="al" style="left:7.600px;top:139.28px">性<span class="q">”</span>和<span class="q">“</span>淡化性<span class="q">”</span>也是文学作品中历史内容的一个重要特征。</div>
<div class="al" style="left:7.600px;top:156.13px">5.文学作品的历史内容通过艺术形式，如狄德罗所言的<span class="q">“</span>做到惊奇而不失其逼</div>
<div class="al" style="left:7.600px;top:172.98px">真<span class="q">”</span>，使得作品具有较强的逼真性和深远的启示性。</div>
<div class="al" style="left:7.600px;top:189.83px">6.不同作家对待历史与现实的态度不一，这影响着他们作品中历史内容的呈现方式</div>
<div class="al" style="left:7.600px;top:206.67px">和艺术表现的侧重点。</div>
<div class="al" style="left:7.600px;top:223.53px">7.文学作品中的历史内容与艺术美相互依存，它是文学美的重要构成要素，通过艺</div>
<div class="al" style="left:7.600px;top:240.38px">术形象的指向性展现历史的某些方面。</div>
<div class="al" style="left:7.600px;top:257.23px">综上所述，文学作品的历史内容是其艺术魅力和社会价值的重要来源，它既具有反</div>
<div class="al" style="left:7.600px;top:274.08px">映社会生活的功能，也具有激发读者深层次思考的功能。</div>
</div>
<svg class="a" style="left:33.500px;top:420px" width="9.500" height="9.500" viewBox="0 0 19 19" fill="none" stroke="#666" stroke-width="1.600" stroke-linecap="round"><path d="M16.500 8A7 7 0 0 0 3.500 5.500M2.500 11a7 7 0 0 0 13 2.500"/><path d="M3 2v4h4M16 17v-4h-4" stroke-linejoin="round"/></svg>
<div class="a" style="left:45.500px;top:419px;font-size:7.400px;line-height:12px;color:#555;white-space:nowrap">重新生成</div>
<div class="a" style="left:79.500px;top:419px;font-size:7.200px;line-height:12px;color:#999;white-space:nowrap">内容由AI生成，仅供参考</div>
<svg class="a" style="left:292.1px;top:420px" width="9" height="9" viewBox="0 0 18 18" fill="none" stroke="#666" stroke-width="1.500" stroke-linejoin="round"><path d="M14 9V1.500H2V15.500H9"/><path d="M5 5.500h6M5 9h3"/><path d="M13.500 11v6M10.500 14h6" stroke-width="1.700"/></svg>
<svg class="a" style="left:307.2px;top:420px" width="9" height="9" viewBox="0 0 18 18" fill="none" stroke="#666" stroke-width="1.500" stroke-linejoin="round"><rect x="6" y="1.500" width="10.500" height="10.500" rx="1"/><path d="M6 5.500H1.500V16.500H12.500V12"/></svg>
<svg class="a" style="left:322.9px;top:420px" width="9.500" height="9" viewBox="0 0 19 18" fill="none" stroke="#666" stroke-width="1.500" stroke-linejoin="round"><path d="M1.500 8h3.500v8.500H1.500zM5 8.500l3.500-7c1.800 0 2.600 1.200 2.300 2.800L10.300 7h5.200c1.300 0 2.200 1 1.900 2.300l-1.200 5.500c-.3 1-1 1.700-2.100 1.700H5"/></svg>
<svg class="a" style="left:338.4px;top:420.500px" width="9.500" height="9" viewBox="0 0 19 18" fill="none" stroke="#666" stroke-width="1.500" stroke-linejoin="round"><path d="M2 1.500h15v8.500h-4.500l-3 3.500-3-3.500H2z"/><path d="M9.500 13.500v3" /></svg>
<div class="a" style="left:353.500px;top:269px;width:3px;height:173px;background:#b9b9b9;border-radius:1.500px"></div>
<div class="a" style="left:17.500px;top:454px;width:333.500px;height:30.500px;border:1px solid #dfe5ef;border-radius:6px;background:#fff;box-shadow:0 1px 4px rgba(60,90,160,.12)"></div>
<div class="a" style="left:30px;top:462px;font-size:8.400px;line-height:15px;color:#aaa;white-space:nowrap">您可以向AI助手提问</div>
<svg class="a" style="left:275.500px;top:461px" width="13" height="15" viewBox="0 0 26 30" fill="none" stroke="#4a78e0" stroke-width="1.500" stroke-linecap="round"><path d="M13 7a6.500 6.500 0 0 0-4 11.600V21h8v-2.400A6.500 6.500 0 0 0 13 7z"/><path d="M10 24h6M11 27h4M13 14v7M10.500 13.500L13 16l2.500-2.500" stroke-width="1.200"/><path d="M13 1v2.500M4 5l1.800 1.800M22 5l-1.800 1.800M1 13.500h2.500M22.500 13.500H25" stroke-width="1.300"/></svg>
<svg class="a" style="left:269.800px;top:473.500px" width="5.500" height="5.500" viewBox="0 0 10 10" fill="none" stroke="#333" stroke-width="1.700"><path d="M1.500 8.500L8.500 1.500M1.500 4.500v4h4"/></svg>
<svg class="a" style="left:297.500px;top:463px" width="13" height="13" viewBox="0 0 26 26" fill="none" stroke="#4a78e0" stroke-width="1.600"><circle cx="13" cy="13" r="11.500"/><path d="M9 10.500c0-2.500 1.800-4 4-4s4 1.400 4 3.600c0 2.600-3.800 2.900-3.800 5.900" stroke-linecap="round"/><circle cx="13.100" cy="19.500" r="1.100" fill="#4a78e0" stroke="none"/></svg>
<div class="a" style="left:267.500px;top:454.500px;width:23.500px;height:28px;border:2.200px solid #ee1118;border-radius:50%"></div>
<div class="a" style="left:293px;top:453.500px;width:23.500px;height:28px;border:2.200px solid #ee1118;border-radius:50%"></div>
<div class="a" style="left:320.500px;top:461px;width:27.500px;height:16.800px;border-radius:8.400px;background:#3a5fe0"></div>
<svg class="a" style="left:329px;top:464.400px" width="11" height="10" viewBox="0 0 20 18"><path d="M1.500 1.500l17 7.500-17 7.500 3.300-7.500z" fill="#fff" stroke="#fff" stroke-width="1.800" stroke-linejoin="round"/><path d="M4.500 9H12" stroke="#3a5fe0" stroke-width="1.600"/></svg>
<div class="a" style="left:0;top:219px;width:11px;height:23.500px;background:#fff;border:1px solid #efeff2;border-left:0;border-radius:0 5px 5px 0"></div>
<div class="a" style="left:0;top:253px;width:11px;height:23.500px;background:#fff;border:1px solid #efeff2;border-left:0;border-radius:0 5px 5px 0"></div>
<svg class="a" style="left:3.500px;top:228.5px" width="4" height="6" viewBox="0 0 4 6" fill="none" stroke="#666" stroke-width="1"><path d="M3.400.5L.8 3l2.600 2.500"/></svg>
<svg class="a" style="left:3.500px;top:261.5px" width="4" height="6" viewBox="0 0 4 6" fill="none" stroke="#666" stroke-width="1"><path d="M.6.5L3.200 3 .6 5.500"/></svg>
</div>
<!-- bottom strip -->
<div class="a" style="left:0;top:527.300px;width:750px;height:4px;background:linear-gradient(180deg,#ececec,#d6d6d6)"></div>
<div class="a" style="left:750px;top:529px;width:368px;height:2px;background:linear-gradient(180deg,#f2f2f2,#e0e0e0)"></div>
</body>
</html>
